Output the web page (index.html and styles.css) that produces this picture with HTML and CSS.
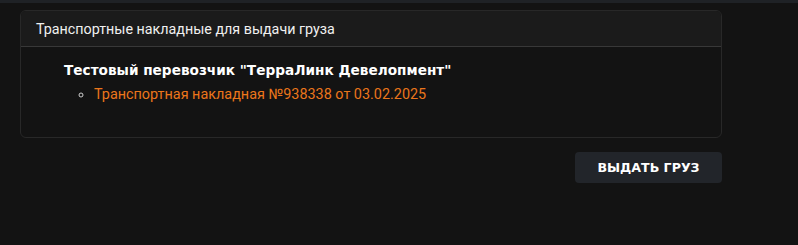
FILE: index.html
```html
<!DOCTYPE html>
<html lang="ru">
<head>
<meta charset="utf-8">
<link rel="stylesheet" href="styles.css">
</head>
<body>
<div class="topbar"></div>
<main class="page">
  <section class="card">
    <header class="card-header">Транспортные накладные для выдачи груза</header>
    <div class="card-body">
      <div class="carrier">Тестовый перевозчик "ТерраЛинк Девелопмент"</div>
      <ul class="waybills">
        <li><a class="waybill" href="#">Транспортная накладная №938338 от 03.02.2025</a></li>
      </ul>
    </div>
  </section>
  <div class="actions">
    <button class="btn" type="button">ВЫДАТЬ ГРУЗ</button>
  </div>
</main>
</body>
</html>
```
FILE: styles.css
```css
html, body {
  margin: 0;
  padding: 0;
  background: #131313;
  height: 100%;
}
body {
  font-family: Roboto, "Liberation Sans", sans-serif;
  color: #e6e6e6;
}
.topbar {
  height: 3px;
  background: #1f2226;
}
.page {
  padding: 7px 76px 0 20px;
}
.card {
  border: 1px solid #282828;
  border-radius: 6px;
  background: #131313;
  overflow: hidden;
}
.card-header {
  height: 36px;
  box-sizing: border-box;
  padding: 0 15px;
  display: flex;
  align-items: center;
  background: #1b1b1b;
  border-bottom: 1px solid #383838;
  font-size: 14.3px;
  color: #f0f0f0;
}
.card-body {
  padding: 13px 43px 32px;
}
.carrier {
  font-family: "DejaVu Sans", sans-serif;
  font-weight: bold;
  font-size: 13.65px;
  color: #ffffff;
  line-height: 20px;
}
.waybills {
  margin: 5px 0 0;
  padding-left: 30px;
  list-style: circle;
  color: #cfcfcf;
  font-size: 14.4px;
  line-height: 20px;
}
.waybill {
  color: #eb761b;
  text-decoration: none;
}
.actions {
  display: flex;
  justify-content: flex-end;
  margin-top: 14px;
}
.btn {
  width: 147px;
  height: 31px;
  border: none;
  border-radius: 4px;
  background: #22252a;
  color: #ffffff;
  font-family: "DejaVu Sans", sans-serif;
  font-weight: bold;
  font-size: 12.6px;
  cursor: pointer;
}
```
